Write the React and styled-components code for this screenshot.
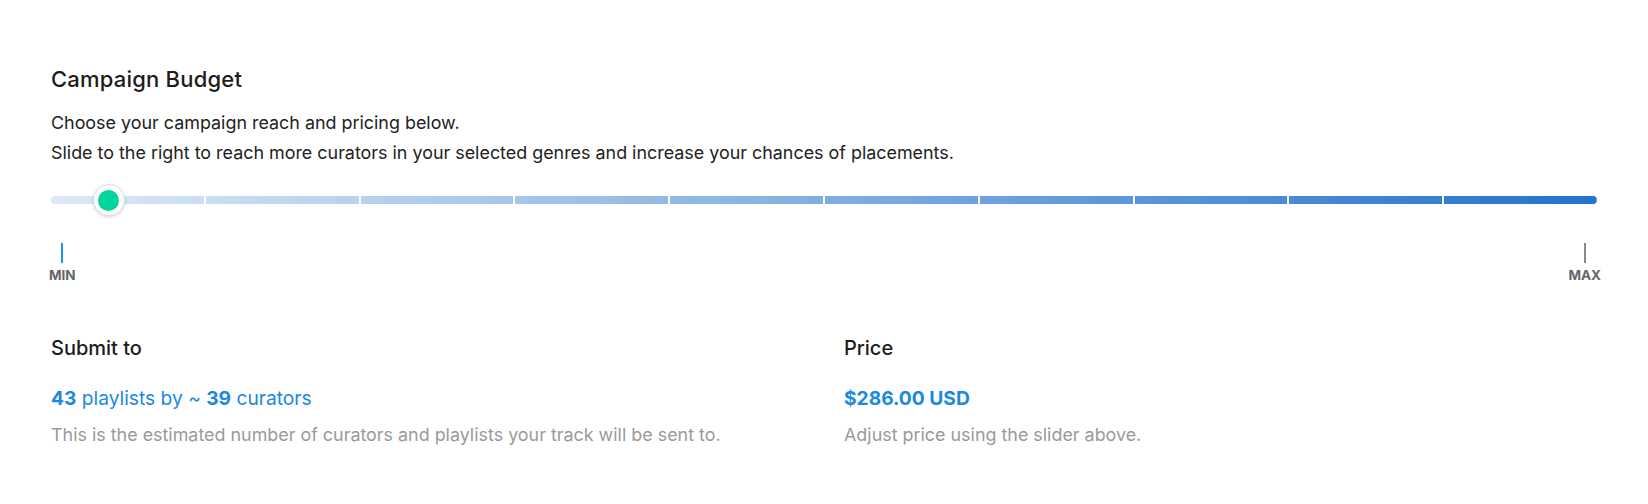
import React from 'react';
import styled, { createGlobalStyle } from 'styled-components';

const GlobalStyle = createGlobalStyle`
  body {
    margin: 0;
    background: #ffffff;
    font-family: Inter, "Noto Sans", sans-serif;
    color: #222222;
  }
`;

const SEGMENTS = 10;
const value = 3.75; // percent of track

const Page = styled.div`
  padding: 65px 51px 0;
`;

const Title = styled.h2`
  margin: 0;
  font-size: 22px;
  line-height: 28px;
  font-weight: 500;
  letter-spacing: 0.2px;
  color: #1c1c1c;
`;

const Intro = styled.p`
  margin: 15px 0 0;
  font-size: 17.9px;
  line-height: 30px;
  color: #222222;
`;

const SliderWrap = styled.div`
  position: relative;
  height: 32px;
  margin-top: 16px;
  display: flex;
  align-items: center;
`;

const Track = styled.div`
  width: 100%;
  height: 8px;
  border-radius: 4px;
  overflow: hidden;
  display: flex;
  gap: 2px;
  background: #ffffff;
`;

const Segment = styled.div`
  flex: 1;
  background: linear-gradient(90deg, #dde9f6 0%, #2473cb 100%);
  background-size: ${(p) => p.$count * 100}% 100%;
  background-position: ${(p) => (p.$index / (p.$count - 1)) * 100}% 0;
`;

const Thumb = styled.div`
  position: absolute;
  top: 0;
  width: 32px;
  height: 32px;
  box-sizing: border-box;
  border-radius: 50%;
  background: #ffffff;
  border: 1px solid #e2e2e2;
  box-shadow: 0 1px 3px rgba(0, 0, 0, 0.18);
  transform: translateX(-50%);
  display: flex;
  align-items: center;
  justify-content: center;

  &::after {
    content: '';
    width: 21px;
    height: 21px;
    border-radius: 50%;
    background: #00d69b;
  }
`;

const Marks = styled.div`
  display: flex;
  justify-content: space-between;
  margin: 27px -4px 0 -2px;
`;

const Mark = styled.div`
  display: flex;
  flex-direction: column;
  align-items: center;
  gap: 4px;
`;

const Tick = styled.span`
  width: 2px;
  height: 20px;
  background: ${(p) => (p.$active ? '#1a93f5' : '#8a8a8a')};
`;

const MarkLabel = styled.span`
  font-size: 13.5px;
  line-height: 16px;
  font-weight: 700;
  color: #666666;
`;

const Summary = styled.div`
  display: grid;
  grid-template-columns: 1fr 1fr;
  gap: 40px;
  margin-top: 51px;
`;

const Column = styled.div`
  display: flex;
  flex-direction: column;
`;

const ColTitle = styled.h3`
  margin: 0;
  font-size: 20px;
  line-height: 28px;
  font-weight: 500;
  color: #1c1c1c;
`;

const Value = styled.div`
  margin-top: 23px;
  font-size: 19.2px;
  line-height: 26px;
  font-weight: ${(p) => (p.$bold ? 700 : 400)};
  color: #1b88e2;

  b {
    font-weight: 700;
  }
`;

const Note = styled.p`
  margin: 10px 0 0;
  font-size: 17.9px;
  line-height: 27.4px;
  color: #9a9a9a;
`;

export default function App() {
  return (
    <>
      <GlobalStyle />
      <Page>
        <Title>Campaign Budget</Title>
        <Intro>
          Choose your campaign reach and pricing below.
          <br />
          Slide to the right to reach more curators in your selected genres and increase your chances of placements.
        </Intro>

        <SliderWrap>
          <Track>
            {Array.from({ length: SEGMENTS }, (_, i) => (
              <Segment key={i} $index={i} $count={SEGMENTS} />
            ))}
          </Track>
          <Thumb style={{ left: `${value}%` }} />
        </SliderWrap>

        <Marks>
          <Mark>
            <Tick $active />
            <MarkLabel>MIN</MarkLabel>
          </Mark>
          <Mark>
            <Tick />
            <MarkLabel>MAX</MarkLabel>
          </Mark>
        </Marks>

        <Summary>
          <Column>
            <ColTitle>Submit to</ColTitle>
            <Value>
              <b>43</b> playlists by ~ <b>39</b> curators
            </Value>
            <Note>This is the estimated number of curators and playlists your track will be sent to.</Note>
          </Column>
          <Column>
            <ColTitle>Price</ColTitle>
            <Value $bold>$286.00 USD</Value>
            <Note>Adjust price using the slider above.</Note>
          </Column>
        </Summary>
      </Page>
    </>
  );
}
